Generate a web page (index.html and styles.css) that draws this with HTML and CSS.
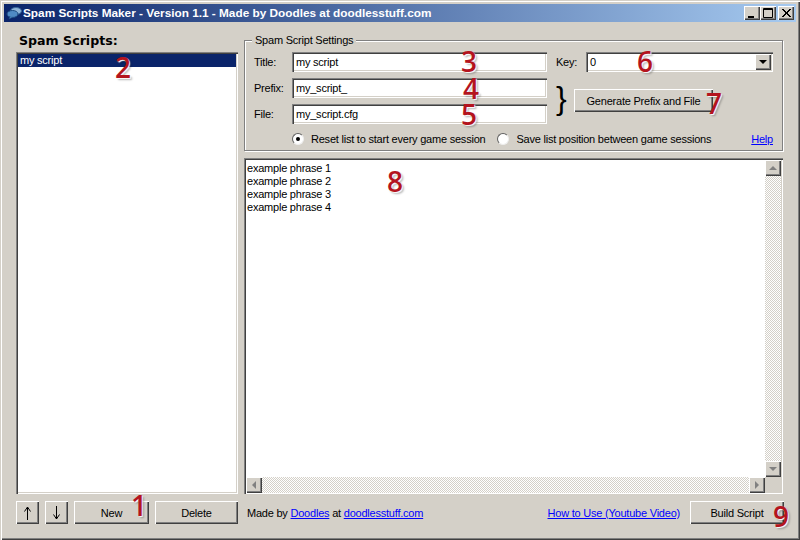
FILE: index.html
```html
<!DOCTYPE html>
<html>
<head>
	<title>Spam Scripts Maker</title>
	<link rel="stylesheet" href="styles.css">
</head>
<body>
	<div class="window">
		<div class="titlebar">
			<svg class="app-icon" width="16" height="14" viewBox="0 0 16 14">
				<ellipse cx="10" cy="5" rx="5.5" ry="3.5" fill="#8fb4d8" stroke="#3c6a9c"/>
				<ellipse cx="6.5" cy="8" rx="5.5" ry="3.5" fill="#4f8ac4" stroke="#1c4a80"/>
				<path d="M4 10.5 L3 13 L7 11" fill="#4f8ac4" stroke="#1c4a80" stroke-width="0.6"/>
			</svg>
			<span class="title-text">Spam Scripts Maker - Version 1.1 - Made by Doodles at doodlesstuff.com</span>
			<div class="title-buttons">
				<div class="cap-btn"><svg width="16" height="14" viewBox="0 0 16 14"><rect x="4" y="10" width="6" height="2" fill="#000"/></svg></div>
				<div class="cap-btn"><svg width="16" height="14" viewBox="0 0 16 14"><path d="M3.5 2.5h9v9h-9z M3 3.5h10" fill="none" stroke="#000"/></svg></div>
				<div class="cap-btn cap-close"><svg width="16" height="14" viewBox="0 0 16 14"><path d="M4 3l8 8M5 3l8 8M12 3l-8 8M13 3l-8 8" stroke="#000" fill="none"/></svg></div>
			</div>
		</div>

		<div class="content">
			<div class="left-col">
				<h1 class="list-title">Spam Scripts:</h1>
				<div class="script-list sunken">
					<div class="script-item">my script</div>
				</div>
				<div class="list-buttons">
					<button class="btn btn-arrow"><svg width="9" height="14" viewBox="0 0 9 14"><path d="M4.5 1v13M4.5 1L1.5 5.5M4.5 1l3 4.5" fill="none" stroke="#000"/></svg></button>
					<button class="btn btn-arrow"><svg width="9" height="14" viewBox="0 0 9 14"><path d="M4.5 0v13M4.5 13L1.5 8.5M4.5 13l3-4.5" fill="none" stroke="#000"/></svg></button>
					<button class="btn btn-new">New</button>
					<button class="btn btn-delete">Delete</button>
				</div>
			</div>

			<div class="right-col">
				<fieldset class="settings">
					<legend>Spam Script Settings</legend>
					<div class="settings-top">
						<div class="fields">
							<div class="field"><label>Title:</label><div class="textbox sunken">my script</div></div>
							<div class="field"><label>Prefix:</label><div class="textbox sunken">my_script_</div></div>
							<div class="field"><label>File:</label><div class="textbox sunken">my_script.cfg</div></div>
						</div>
						<div class="side">
							<div class="key-row">
								<label>Key:</label>
								<div class="combo sunken">
									<span>0</span>
									<div class="scroll-btn combo-btn"><i class="arrow arrow-down arrow-black"></i></div>
								</div>
							</div>
							<div class="generate-row">
								<span class="brace">}</span>
								<button class="btn btn-generate">Generate Prefix and File</button>
							</div>
						</div>
					</div>
					<div class="radio-row">
						<span class="radio radio-on"></span><span class="radio-label">Reset list to start every game session</span>
						<span class="radio radio-second"></span><span class="radio-label">Save list position between game sessions</span>
						<a class="help" href="#">Help</a>
					</div>
				</fieldset>

				<div class="editor sunken">
					<div class="editor-main">
						<div class="editor-text">
							<div>example phrase 1</div>
							<div>example phrase 2</div>
							<div>example phrase 3</div>
							<div>example phrase 4</div>
						</div>
						<div class="vscroll">
							<div class="scroll-btn"><i class="arrow arrow-up"></i></div>
							<div class="track"></div>
							<div class="scroll-btn"><i class="arrow arrow-down"></i></div>
						</div>
					</div>
					<div class="hscroll">
						<div class="scroll-btn"><i class="arrow arrow-left"></i></div>
						<div class="track"></div>
						<div class="scroll-btn"><i class="arrow arrow-right"></i></div>
						<div class="corner"></div>
					</div>
				</div>

				<div class="footer">
					<span>Made by <a href="#">Doodles</a> at <a href="#">doodlesstuff.com</a></span>
					<a class="howto" href="#">How to Use (Youtube Video)</a>
					<button class="btn btn-build">Build Script</button>
				</div>
			</div>
		</div>

		<!-- numbered callouts drawn over the screenshot -->
		<span class="num num-1">1</span>
		<span class="num num-2">2</span>
		<span class="num num-3">3</span>
		<span class="num num-4">4</span>
		<span class="num num-5">5</span>
		<span class="num num-6">6</span>
		<span class="num num-7">7</span>
		<span class="num num-8">8</span>
		<span class="num num-9">9</span>
	</div>
</body>
</html>
```

FILE: styles.css
```css
/* Whole window */
body {
  margin: 0;
  background: #d4d0c8;
  font-family: "Liberation Sans", Arial, sans-serif;
  font-size: 11px;
  letter-spacing: -0.22px;
  color: #000;
}

.window {
  position: relative;
  width: 800px;
  height: 540px;
  box-sizing: border-box;
  padding: 4px;
  overflow: hidden;
  background: #d4d0c8;
  box-shadow: inset 1px 1px #d4d0c8, inset 2px 2px #fff, inset -1px -1px #404040, inset -2px -2px #808080;
}

a {
  color: #0000ff;
}

/* Title bar */
.titlebar {
  display: flex;
  align-items: center;
  height: 18px;
  padding-left: 2px;
  background: linear-gradient(to right, #0a246a, #a6caf0);
}

.app-icon {
  flex: none;
  margin-right: 1px;
}

.title-text {
  flex: 1;
  color: #fff;
  font-weight: bold;
  font-size: 11.8px;
  letter-spacing: 0;
  white-space: nowrap;
}

.title-buttons {
  display: flex;
  padding-right: 2px;
}

.cap-btn {
  width: 16px;
  height: 14px;
  background: #d4d0c8;
  box-shadow: inset 1px 1px #fff, inset -1px -1px #404040, inset -2px -2px #808080;
}

.cap-close {
  margin-left: 2px;
}

/* Bevels */
.sunken {
  background: #fff;
  box-shadow: inset 1px 1px #808080, inset 2px 2px #404040, inset -1px -1px #fff, inset -2px -2px #d4d0c8;
}

.btn {
  display: flex;
  align-items: center;
  justify-content: center;
  height: 23px;
  padding: 0;
  border: none;
  background: #d4d0c8;
  font-family: inherit;
  font-size: 11px;
  letter-spacing: -0.22px;
  color: #000;
  box-shadow: inset 1px 1px #fff, inset -1px -1px #404040, inset -2px -2px #808080;
}

/* Main layout */
.content {
  display: flex;
  gap: 6px;
  padding: 0 12px;
  height: 502px;
}

.left-col {
  display: flex;
  flex-direction: column;
  width: 222px;
}

.list-title {
  height: 30px;
  margin: 0;
  padding: 11px 0 0 3px;
  box-sizing: border-box;
  font-family: "DejaVu Sans", sans-serif;
  font-size: 12.6px;
  font-weight: bold;
  letter-spacing: 0;
  line-height: 16px;
}

.script-list {
  flex: 1;
  padding: 2px;
}

.script-item {
  height: 13px;
  padding-left: 2px;
  line-height: 13px;
  background: #0a246a;
  color: #fff;
}

.list-buttons {
  display: flex;
  gap: 6px;
  margin-top: 7px;
}

.btn-arrow {
  width: 23px;
}

.btn-new {
  width: 75px;
}

.btn-delete {
  width: 83px;
}

.right-col {
  display: flex;
  flex-direction: column;
  width: 540px;
  padding-top: 12px;
}

/* Settings group */
.settings {
  width: 539px;
  height: 117px;
  box-sizing: border-box;
  margin: 0;
  padding: 6px 9px 0;
  border: 1px solid #808080;
  min-width: 0;
  box-shadow: 1px 1px #fff, inset 1px 1px #fff;
}

.settings legend {
  margin-left: -2px;
  padding: 0 3px;
  line-height: 12px;
  background: #d4d0c8;
}

.settings-top {
  display: flex;
}

.fields {
  display: flex;
  flex-direction: column;
  gap: 6px;
  width: 293px;
}

.field {
  display: flex;
  align-items: center;
}

.field label {
  width: 38px;
}

.textbox {
  width: 255px;
  height: 20px;
  box-sizing: border-box;
  padding-left: 4px;
  line-height: 20px;
}

.side {
  margin-left: 9px;
}

.key-row {
  display: flex;
  align-items: center;
}

.key-row label {
  width: 30px;
}

.combo {
  display: flex;
  align-items: center;
  justify-content: space-between;
  width: 187px;
  height: 20px;
  box-sizing: border-box;
  padding: 2px 2px 2px 4px;
}

.generate-row {
  display: flex;
  margin-top: 12px;
}

.brace {
  width: 18px;
  font-size: 32px;
  line-height: 28px;
}

.btn-generate {
  width: 139px;
  margin-top: 5px;
}

/* Radios */
.radio-row {
  display: flex;
  align-items: center;
  height: 14px;
  margin-top: 8px;
  padding-left: 38px;
  white-space: nowrap;
}

.radio {
  position: relative;
  flex: none;
  width: 12px;
  height: 12px;
  box-sizing: border-box;
  border: 1px solid;
  border-color: #606060 #eee #eee #606060;
  border-radius: 50%;
  background: #fff;
  margin-right: 7px;
}

.radio-on::after {
  content: "";
  position: absolute;
  top: 3px;
  left: 3px;
  width: 4px;
  height: 4px;
  border-radius: 50%;
  background: #000;
}

.radio-second {
  margin-left: 12px;
}

.help {
  margin-left: auto;
}

/* Editor */
.editor {
  display: flex;
  flex-direction: column;
  width: 539px;
  height: 336px;
  box-sizing: border-box;
  margin-top: 7px;
  padding: 2px 2px 1px;
}

.editor-main {
  flex: 1;
  display: flex;
  min-height: 0;
}

.editor-text {
  flex: 1;
  padding: 2px 1px;
  line-height: 13px;
}

.vscroll {
  display: flex;
  flex-direction: column;
  width: 16px;
}

.hscroll {
  display: flex;
  height: 16px;
}

.track {
  flex: 1;
  background: conic-gradient(#d4d0c8 25%, #fff 0 50%, #d4d0c8 0 75%, #fff 0) 0 0 / 2px 2px;
}

.corner {
  width: 16px;
  background: #d4d0c8;
}

.scroll-btn {
  position: relative;
  flex: none;
  width: 16px;
  height: 16px;
  background: #d4d0c8;
  box-shadow: inset 1px 1px #fff, inset -1px -1px #404040, inset -2px -2px #808080;
}

.arrow {
  position: absolute;
  width: 0;
  height: 0;
  border: 4px solid transparent;
}

.arrow-up {
  top: 2px;
  left: 4px;
  border-bottom-color: #808080;
}

.arrow-down {
  top: 6px;
  left: 4px;
  border-top-color: #808080;
}

.arrow-left {
  top: 4px;
  left: 2px;
  border-right-color: #808080;
}

.arrow-right {
  top: 4px;
  left: 6px;
  border-left-color: #808080;
}

.arrow-black {
  border-top-color: #000;
}

/* Footer */
.footer {
  display: flex;
  align-items: center;
  margin-top: 7px;
  padding-left: 3px;
}

.howto {
  margin-left: auto;
}

.btn-build {
  width: 94px;
  margin-left: 10px;
}

/* Red numbers over the picture */
.num {
  position: absolute;
  font-family: "Open Sans", sans-serif;
  font-size: 28px;
  font-weight: 600;
  letter-spacing: 0;
  line-height: 22px;
  color: #b4141e;
  text-shadow: 1px 1px 1px #fff, 2px 2px 2px rgba(0, 0, 0, 0.3);
}

.num-1 { left: 131px; top: 494px; }
.num-2 { left: 115px; top: 56px; }
.num-3 { left: 461px; top: 50px; }
.num-4 { left: 463px; top: 77px; }
.num-5 { left: 461px; top: 103px; }
.num-6 { left: 637px; top: 50px; }
.num-7 { left: 706px; top: 92px; }
.num-8 { left: 387px; top: 170px; }
.num-9 { left: 773px; top: 505px; }
```
